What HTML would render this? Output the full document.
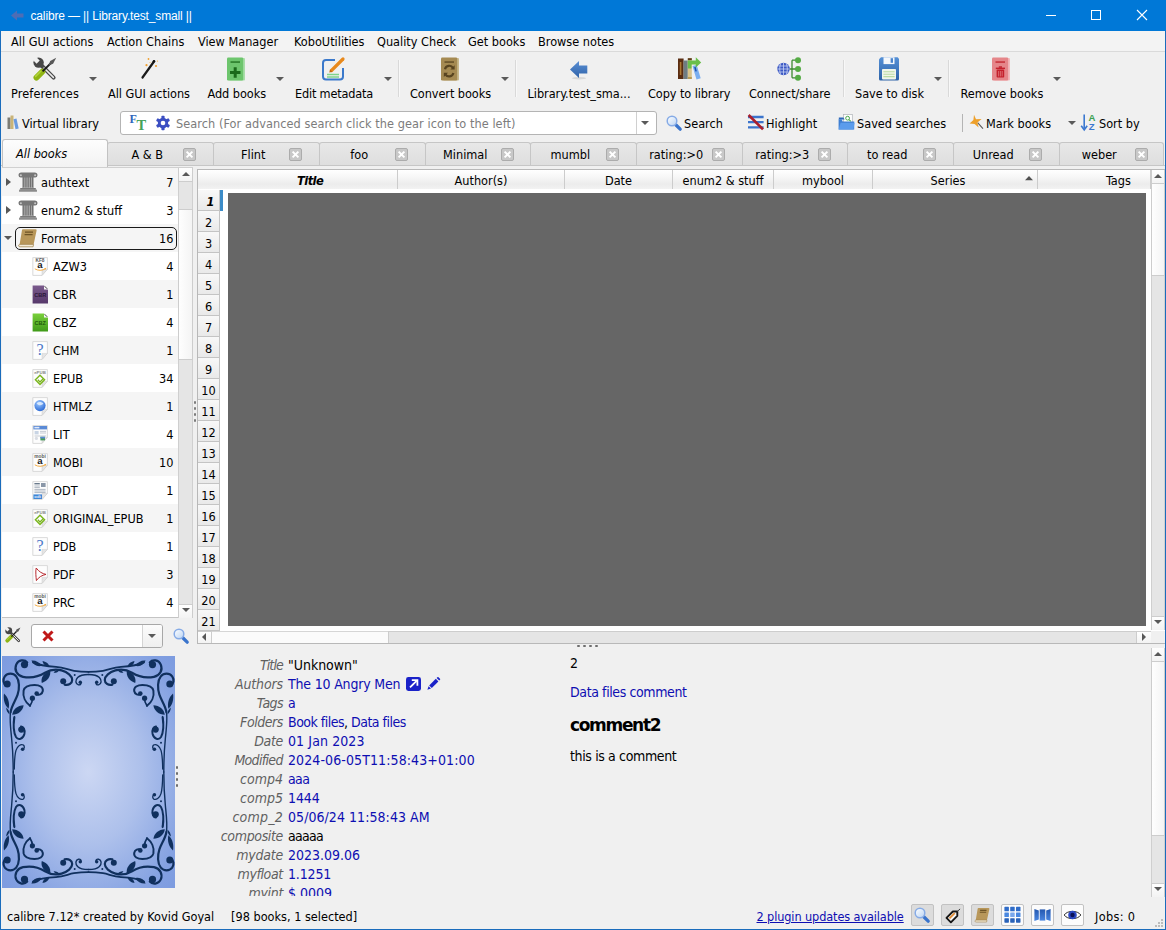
<!DOCTYPE html>
<html lang="en"><head><meta charset="utf-8"><title>calibre</title>
<style>
*{box-sizing:border-box;margin:0;padding:0}
html,body{width:1166px;height:930px;overflow:hidden;background:#f0f0f0}
body{font-family:"DejaVu Sans Condensed","DejaVu Sans","Liberation Sans",sans-serif;font-stretch:condensed;font-size:12.6px;color:#000;position:relative}
.a{position:absolute}
.t{position:absolute;white-space:nowrap;line-height:16px;height:16px}
.c{text-align:center}
.r{text-align:right}
svg{position:absolute;overflow:visible}
#titlebar{left:0;top:0;width:1166px;height:31px;background:#0078d7;color:#fff}
#title{left:30.5px;top:8px;font-family:"Liberation Sans",sans-serif;font-size:12px;color:#fff;letter-spacing:0px}
#menubar{left:1px;top:31px;width:1164px;height:21px;background:#f3f3f3;border-bottom:1px solid #dadada}
.sep{position:absolute;width:1px;background:#d9d9d9;border-right:1px solid #f8f8f8;box-sizing:content-box}
.dd{position:absolute;width:0;height:0;border-left:4px solid transparent;border-right:4px solid transparent;border-top:4px solid #5a5a5a}
.tab{position:absolute;top:142px;height:23px;background:linear-gradient(#e8e8e8,#dedede);border:1px solid #c6c6c6;border-bottom:none;border-radius:3px 3px 0 0}
.tabx{position:absolute;width:13px;height:13px;top:148px;background:#c8c8c8;border:1px solid #acacac;border-radius:2px}
.row{position:absolute;left:2px;width:176px;height:28px}
.hdr{position:absolute;top:170px;height:19px;border-right:1px solid #c8c8c8}
.rh{position:absolute;left:198px;width:22px;height:21px;border:none;border-right:1px solid #c4c4c4;border-bottom:1px solid #c4c4c4;background:linear-gradient(#f8f8f8,#e9e9e9);text-align:center;line-height:23px;font-size:12.6px}
.lbl{position:absolute;white-space:nowrap;font-style:italic;color:#606060;font-size:14px;line-height:18px;height:18px}
.val{position:absolute;left:288px;white-space:nowrap;font-size:14px;line-height:18px;height:18px;color:#0e0eb2}
.sbtn{position:absolute;top:904px;width:23px;height:22px;border:1px solid #c2c2c2;border-radius:2px}
</style></head>
<body>
<div id="titlebar" class="a"></div>
<svg style="left:11px;top:10px" width="13" height="11" viewBox="0 0 13 11"><path d="M0 5.5L6 0.5V3.5H12.5V7.5H6V10.5z" fill="#4d6db5"/></svg>
<div id="title" class="t"><span id="f1" style="letter-spacing:-0.150px;">calibre — || Library.test_small ||</span></div>
<svg style="left:1040px;top:8px" width="120" height="16" viewBox="0 0 120 16"><path d="M6 7.5h10" stroke="#fff" stroke-width="1"/><rect x="51.5" y="2.5" width="9" height="9" fill="none" stroke="#fff" stroke-width="1"/><path d="M97 2l10 10M107 2l-10 10" stroke="#fff" stroke-width="1.1"/></svg>
<div id="menubar" class="a"></div>
<div class="t " style="left:11px;top:33.5px;">All GUI actions</div>
<div class="t " style="left:107px;top:33.5px;">Action Chains</div>
<div class="t " style="left:198px;top:33.5px;">View Manager</div>
<div class="t " style="left:294px;top:33.5px;">KoboUtilities</div>
<div class="t " style="left:377px;top:33.5px;">Quality Check</div>
<div class="t " style="left:468px;top:33.5px;">Get books</div>
<div class="t " style="left:538px;top:33.5px;">Browse notes</div>
<div class="t c" style="left:1px;top:86px;width:88px;"><span id="f2" style="letter-spacing:0.131px;">Preferences</span></div>
<svg style="left:33px;top:57px" width="24" height="24" viewBox="0 0 24 24"><path d="M8 8L20.6 20.6" stroke="#4a4a4a" stroke-width="4" stroke-linecap="round"/><path d="M11 11L20.4 20.4" stroke="#ececec" stroke-width="1.5" stroke-linecap="round"/><circle cx="5.6" cy="5.6" r="5.2" fill="#474747"/><rect x="-3" y="3.4" width="8" height="4.4" fill="#f0f0f0" transform="rotate(45 5.6 5.6) translate(0,0)"/><path d="M3.4 20.6L9.4 14.6" stroke="#8fb414" stroke-width="5.8" stroke-linecap="round"/><path d="M2.6 19.4L8 14" stroke="#b2d43c" stroke-width="1.5" stroke-linecap="round"/><path d="M9.6 14.4L17.6 6.4" stroke="#1a1a1a" stroke-width="2"/><path d="M15.6 8.4L17.2 3.9L23.2 0.8L20.1 6.8z" fill="#585858"/></svg>
<div class="dd" style="left:89px;top:77px"></div>
<div class="t c" style="left:98px;top:86px;width:102px;"><span id="f3" style="letter-spacing:-0.029px;">All GUI actions</span></div>
<svg style="left:137px;top:57px" width="24" height="24" viewBox="0 0 24 24"><path d="M5.5 20.5L17 4.5" stroke="#1a1a1a" stroke-width="2.2" stroke-linecap="round"/><circle cx="17" cy="4.3" r="1.3" fill="#111"/><g fill="#f0a030"><circle cx="11.5" cy="2" r="0.9"/><circle cx="9.5" cy="8.2" r="1.1"/><circle cx="19" cy="9" r="1.1"/><circle cx="20.5" cy="4" r="0.6"/><circle cx="13" cy="5.5" r="0.5"/></g></svg>
<div class="t c" style="left:197.5px;top:86px;width:78.5px;"><span id="f4" style="letter-spacing:-0.061px;">Add books</span></div>
<svg style="left:224px;top:57px" width="24" height="24" viewBox="0 0 24 24"><rect x="5" y="1" width="16" height="22.5" rx="1" fill="#a9dea9"/><rect x="3" y="0.5" width="16.2" height="23" rx="1.2" fill="#6dc56d"/><rect x="6.5" y="4.4" width="9.5" height="1.3" fill="#1d6d1d"/><path d="M6 15.5h10.5M11.2 10.2v10.6" stroke="#1a6a1a" stroke-width="3"/></svg>
<div class="dd" style="left:276px;top:77px"></div>
<div class="t c" style="left:285px;top:86px;width:98px;"><span id="f5" style="letter-spacing:-0.189px;">Edit metadata</span></div>
<svg style="left:321px;top:57px" width="24" height="24" viewBox="0 0 24 24"><path d="M14 3H5a3 3 0 0 0-3 3v13.5a3 3 0 0 0 3 3h14a3 3 0 0 0 3-3V11" fill="none" stroke="#3b79cb" stroke-width="2"/><path d="M6 17.5h12M6 20h12" stroke="#7fd38a" stroke-width="1.3"/><path d="M10.5 13.5L22 2" stroke="#e8891c" stroke-width="3.2" stroke-linecap="round"/><path d="M8.2 15.6l0.9-3.2 2.4 2.4z" fill="#c46a10"/></svg>
<div class="dd" style="left:384px;top:77px"></div>
<div class="t c" style="left:400px;top:86px;width:101px;"><span id="f6" style="letter-spacing:-0.071px;">Convert books</span></div>
<svg style="left:438px;top:57px" width="24" height="24" viewBox="0 0 24 24"><rect x="5" y="1" width="16" height="22.5" rx="1" fill="#c9b98e"/><rect x="3" y="0.5" width="16.2" height="23" rx="1.2" fill="#a58a52"/><rect x="6.5" y="4.4" width="9.5" height="1.3" fill="#5a4622"/><path d="M7 12.2a4.4 4.4 0 0 1 8-1.4" fill="none" stroke="#584420" stroke-width="2.2"/><path d="M16.6 8.2v4.2h-4.2z" fill="#584420"/><path d="M15.4 16a4.4 4.4 0 0 1-8 1.4" fill="none" stroke="#584420" stroke-width="2.2"/><path d="M5.8 20v-4.2h4.2z" fill="#584420"/></svg>
<div class="dd" style="left:501px;top:77px"></div>
<div class="t c" style="left:517.5px;top:86px;width:123px;"><span id="f7" style="letter-spacing:-0.027px;">Library.test_sma...</span></div>
<svg style="left:567px;top:57px" width="24" height="24" viewBox="0 0 24 24"><defs><linearGradient id="lag" x1="0" y1="0" x2="0" y2="1"><stop offset="0" stop-color="#5a8fd4"/><stop offset="1" stop-color="#2f62a8"/></linearGradient></defs><ellipse cx="12" cy="21.2" rx="7" ry="1.2" fill="#d8d8d8"/><path d="M3 12.5L12 4v4.6h8.3v8H12v4.4z" fill="url(#lag)"/></svg>
<div class="t c" style="left:638px;top:86px;width:102.5px;"><span id="f8" style="letter-spacing:-0.084px;">Copy to library</span></div>
<svg style="left:677px;top:57px" width="24" height="24" viewBox="0 0 24 24"><rect x="1" y="1.5" width="5.6" height="20.5" fill="#5a2d12"/><rect x="2.8" y="5" width="1.6" height="13" fill="#c08a3a" opacity="0.8"/><rect x="6.6" y="3.5" width="4.2" height="18.5" fill="#6e7c82"/><rect x="10.8" y="1.2" width="4" height="20.8" fill="#d9c48c"/><rect x="10.8" y="1.2" width="4" height="2" fill="#5a3a1a"/><rect x="10.8" y="20" width="4" height="2" fill="#b89a55"/><path d="M15.5 9l4.2-1 4 13.2-4.2 1.2z" fill="#7aaef0"/><path d="M17.2 10.2l1.4-0.4 1.2 4.4-1.4 0.4z" fill="#1e4ea8"/><path d="M10.8 3.5h8V0.2L24.2 5.4 18.8 10.4V7.6h-4.3v4h-3.7z" fill="#6abf4b"/></svg>
<div class="t c" style="left:739px;top:86px;width:101.5px;"><span id="f9" style="letter-spacing:-0.043px;">Connect/share</span></div>
<svg style="left:777px;top:57px" width="24" height="24" viewBox="0 0 24 24"><path d="M12.5 12H15M15 3.2V20.8M15 3.2h4M15 12h4M15 20.8h4" stroke="#3d8a30" stroke-width="1.3" fill="none"/><circle cx="21" cy="3.2" r="3" fill="#55ab45"/><circle cx="21" cy="12" r="3" fill="#55ab45"/><circle cx="21" cy="20.8" r="3" fill="#55ab45"/><circle cx="6.5" cy="12" r="6.2" fill="#3d59c4"/><path d="M0.6 12h11.8M1.5 9h10M1.5 15h10M6.5 6v12M3.6 6.6c-1.2 3.4-1.2 7.4 0 10.8M9.4 6.6c1.2 3.4 1.2 7.4 0 10.8" stroke="#c9d4f4" stroke-width="0.8" fill="none"/></svg>
<div class="t c" style="left:845px;top:86px;width:89px;"><span id="f10" style="letter-spacing:-0.016px;">Save to disk</span></div>
<svg style="left:877px;top:57px" width="24" height="24" viewBox="0 0 24 24"><defs><linearGradient id="svg1" x1="0" y1="0" x2="0" y2="1"><stop offset="0" stop-color="#5590d6"/><stop offset="1" stop-color="#2d63a8"/></linearGradient></defs><path d="M4 0.3h16.6l1.4 1.4V22a1.5 1.5 0 0 1-1.5 1.5H3.5A1.5 1.5 0 0 1 2 22V2.3z" fill="url(#svg1)"/><rect x="6.5" y="0.3" width="11" height="6.8" fill="#f4f7fb"/><rect x="13.6" y="1.2" width="2.4" height="4.6" fill="#4a84cc"/><rect x="5" y="12" width="14" height="10.4" rx="0.8" fill="#f1f6ea"/><path d="M6.4 14.8h11.2M6.4 17.2h11.2M6.4 19.6h11.2" stroke="#b9dca2" stroke-width="1.1"/></svg>
<div class="dd" style="left:934px;top:77px"></div>
<div class="t c" style="left:950.4px;top:86px;width:102.9px;"><span id="f11" style="letter-spacing:-0.012px;">Remove books</span></div>
<svg style="left:989px;top:57px" width="24" height="24" viewBox="0 0 24 24"><rect x="5" y="1" width="16" height="22.5" rx="1" fill="#f3bcbe"/><rect x="3" y="0.5" width="16.2" height="23" rx="1.2" fill="#e5868a"/><rect x="6.5" y="4.4" width="9.5" height="1.3" fill="#c0202a"/><rect x="7.6" y="12.6" width="7.6" height="8" rx="0.8" fill="#c4202c"/><rect x="6.8" y="10.6" width="9.2" height="1.5" fill="#c4202c"/><rect x="9.8" y="9.3" width="3.2" height="1.5" fill="#c4202c"/><path d="M9.6 14v5.4M11.4 14v5.4M13.2 14v5.4" stroke="#e5868a" stroke-width="0.7"/></svg>
<div class="dd" style="left:1053px;top:77px"></div>
<div class="sep" style="left:398px;top:60px;height:37px"></div>
<div class="sep" style="left:515px;top:60px;height:37px"></div>
<div class="sep" style="left:843px;top:60px;height:37px"></div>
<div class="sep" style="left:948px;top:60px;height:37px"></div>
<svg style="left:7px;top:115px" width="12" height="15" viewBox="0 0 12 15"><rect x="0.5" y="2.5" width="3" height="11.5" fill="#7c7c74"/><rect x="3.5" y="0.5" width="3" height="13.5" fill="#c9b478"/><path d="M6.5 4.2l3-0.8 2.2 10-3.2 0.8z" fill="#6a9be0"/></svg>
<div class="t " style="left:22px;top:116px;">Virtual library</div>
<div class="a" style="left:120px;top:111px;width:537px;height:24px;background:#fff;border:1px solid #b4b4b4;border-radius:3px"></div>
<div class="a" style="left:636px;top:112px;width:1px;height:22px;background:#d0d0d0"></div>
<div class="dd" style="left:641px;top:121px"></div>
<div class="t" style="left:129.5px;top:111.2px;font-family:'Liberation Serif',serif;font-size:12px;font-weight:bold;color:#3166bc;line-height:16px">F</div>
<div class="t" style="left:136.4px;top:117.3px;font-family:'Liberation Serif',serif;font-size:14.5px;font-weight:bold;color:#45a35a;line-height:16px">T</div>
<svg style="left:156px;top:116px" width="14" height="14" viewBox="0 0 14 14"><rect x="5.4" y="-0.2" width="3.2" height="14.4" rx="0.8" transform="rotate(0 7 7)" fill="#3b4ec2"/><rect x="5.4" y="-0.2" width="3.2" height="14.4" rx="0.8" transform="rotate(60 7 7)" fill="#3b4ec2"/><rect x="5.4" y="-0.2" width="3.2" height="14.4" rx="0.8" transform="rotate(120 7 7)" fill="#3b4ec2"/><circle cx="7" cy="7" r="5.2" fill="#3b4ec2"/><circle cx="7" cy="7" r="2.3" fill="#fff"/></svg>
<div class="t " style="left:176px;top:116px;color:#7c7c7c"><span id="f12" style="letter-spacing:0.061px;">Search (For advanced search click the gear icon to the left)</span></div>
<svg style="left:666px;top:115px" width="16" height="16" viewBox="0 0 16 16"><defs><linearGradient id="mg1" x1="0" y1="0" x2="1" y2="1"><stop offset="0" stop-color="#ffffff"/><stop offset="1" stop-color="#b9d3f3"/></linearGradient></defs><path d="M10 10L14.2 14.2" stroke="#3a74cc" stroke-width="3.3" stroke-linecap="round"/><circle cx="6" cy="6" r="4.8" fill="url(#mg1)" stroke="#86abe6" stroke-width="1.5"/></svg>
<div class="t " style="left:684px;top:116px;">Search</div>
<svg style="left:747px;top:114px" width="18" height="16" viewBox="0 0 18 16"><path d="M1 3h15.6M1 8.2h15.6M1 13.4h15.6" stroke="#3b74cc" stroke-width="2.3"/><path d="M1.6 1L16 15.4" stroke="#aa1e2c" stroke-width="2.6"/></svg>
<div class="t " style="left:766px;top:116px;">Highlight</div>
<svg style="left:838px;top:114px" width="17" height="16" viewBox="0 0 17 16"><rect x="5.5" y="0.6" width="8.8" height="9" fill="#fdfdfd" stroke="#b0b4b8" stroke-width="0.7"/><circle cx="9.6" cy="4.2" r="1.9" fill="none" stroke="#4aa84a" stroke-width="1"/><path d="M11 5.6l1.8 1.8" stroke="#4aa84a" stroke-width="1.1"/><path d="M0.8 3.6h4.6l1.2 1.8h-5.8z" fill="#2f69b8"/><path d="M0.6 15.4V5.2h3l1 2.2h11.6v8z" fill="#3f7fd2"/><path d="M0.6 15.4l2-6.6h14l-1.2 6.6z" fill="#5b9cec"/></svg>
<div class="t " style="left:857px;top:116px;">Saved searches</div>
<div class="a" style="left:962px;top:114px;width:1px;height:18px;background:#b4b4b4"></div>
<svg style="left:969px;top:114px" width="15" height="16" viewBox="0 0 15 16"><path d="M8.6 8.6L14 14.6" stroke="#5a5a5a" stroke-width="1.1"/><path d="M5 0.8L7 5.2L12.6 5L8.4 8.6L9.6 13.4L5.6 10L0.6 9.4L4.4 6z" fill="#eea02a"/></svg>
<div class="t " style="left:986px;top:116px;">Mark books</div>
<div class="dd" style="left:1068px;top:121px"></div>
<svg style="left:1081px;top:114px" width="16" height="17" viewBox="0 0 16 17"><path d="M3.2 0.5v14" stroke="#3b78d0" stroke-width="1.6"/><path d="M0.2 11.8l3 4 3-4" fill="none" stroke="#3b78d0" stroke-width="1.6"/><text x="7.6" y="7.2" font-family="Liberation Sans,sans-serif" font-weight="bold" font-size="9.6" fill="#3aa050">A</text><text x="7.8" y="16" font-family="Liberation Sans,sans-serif" font-weight="bold" font-size="9.6" fill="#3b78d0">Z</text></svg>
<div class="t " style="left:1099px;top:116px;">Sort by</div>
<div class="a" style="left:1px;top:165px;width:1164px;height:1px;background:#c6c6c6"></div>
<div class="tab" style="left:107px;width:107px"></div>
<div class="t c" style="left:107px;top:147px;width:80.5px;">A &amp; B</div>
<div class="tabx" style="left:183px"></div>
<svg style="left:183px;top:148px" width="13" height="13" viewBox="0 0 13 13"><path d="M3.6 3.6l5.8 5.8M9.4 3.6l-5.8 5.8" stroke="#fff" stroke-width="2"/></svg>
<div class="tab" style="left:213px;width:107px"></div>
<div class="t c" style="left:213px;top:147px;width:80.5px;">Flint</div>
<div class="tabx" style="left:289px"></div>
<svg style="left:289px;top:148px" width="13" height="13" viewBox="0 0 13 13"><path d="M3.6 3.6l5.8 5.8M9.4 3.6l-5.8 5.8" stroke="#fff" stroke-width="2"/></svg>
<div class="tab" style="left:319px;width:107px"></div>
<div class="t c" style="left:319px;top:147px;width:80.5px;">foo</div>
<div class="tabx" style="left:395px"></div>
<svg style="left:395px;top:148px" width="13" height="13" viewBox="0 0 13 13"><path d="M3.6 3.6l5.8 5.8M9.4 3.6l-5.8 5.8" stroke="#fff" stroke-width="2"/></svg>
<div class="tab" style="left:425px;width:106px"></div>
<div class="t c" style="left:425px;top:147px;width:80.5px;">Minimal</div>
<div class="tabx" style="left:501px"></div>
<svg style="left:501px;top:148px" width="13" height="13" viewBox="0 0 13 13"><path d="M3.6 3.6l5.8 5.8M9.4 3.6l-5.8 5.8" stroke="#fff" stroke-width="2"/></svg>
<div class="tab" style="left:530px;width:107px"></div>
<div class="t c" style="left:530px;top:147px;width:80.5px;">mumbl</div>
<div class="tabx" style="left:606px"></div>
<svg style="left:606px;top:148px" width="13" height="13" viewBox="0 0 13 13"><path d="M3.6 3.6l5.8 5.8M9.4 3.6l-5.8 5.8" stroke="#fff" stroke-width="2"/></svg>
<div class="tab" style="left:636px;width:107px"></div>
<div class="t c" style="left:636px;top:147px;width:80.5px;">rating:&gt;0</div>
<div class="tabx" style="left:712px"></div>
<svg style="left:712px;top:148px" width="13" height="13" viewBox="0 0 13 13"><path d="M3.6 3.6l5.8 5.8M9.4 3.6l-5.8 5.8" stroke="#fff" stroke-width="2"/></svg>
<div class="tab" style="left:742px;width:106px"></div>
<div class="t c" style="left:742px;top:147px;width:80.5px;">rating:&gt;3</div>
<div class="tabx" style="left:818px"></div>
<svg style="left:818px;top:148px" width="13" height="13" viewBox="0 0 13 13"><path d="M3.6 3.6l5.8 5.8M9.4 3.6l-5.8 5.8" stroke="#fff" stroke-width="2"/></svg>
<div class="tab" style="left:847px;width:107px"></div>
<div class="t c" style="left:847px;top:147px;width:80.5px;">to read</div>
<div class="tabx" style="left:923px"></div>
<svg style="left:923px;top:148px" width="13" height="13" viewBox="0 0 13 13"><path d="M3.6 3.6l5.8 5.8M9.4 3.6l-5.8 5.8" stroke="#fff" stroke-width="2"/></svg>
<div class="tab" style="left:953px;width:107px"></div>
<div class="t c" style="left:953px;top:147px;width:80.5px;">Unread</div>
<div class="tabx" style="left:1029px"></div>
<svg style="left:1029px;top:148px" width="13" height="13" viewBox="0 0 13 13"><path d="M3.6 3.6l5.8 5.8M9.4 3.6l-5.8 5.8" stroke="#fff" stroke-width="2"/></svg>
<div class="tab" style="left:1059px;width:105px"></div>
<div class="t c" style="left:1059px;top:147px;width:80.5px;">weber</div>
<div class="tabx" style="left:1135px"></div>
<svg style="left:1135px;top:148px" width="13" height="13" viewBox="0 0 13 13"><path d="M3.6 3.6l5.8 5.8M9.4 3.6l-5.8 5.8" stroke="#fff" stroke-width="2"/></svg>
<div class="a" style="left:2px;top:139px;width:106px;height:28px;background:linear-gradient(#fdfdfd,#f2f2f2);border:1px solid #c2c2c2;border-bottom:none;border-radius:3px 3px 0 0"></div>
<div class="t " style="left:16px;top:146px;font-style:italic">All books</div>
<div class="a" style="left:2px;top:167px;width:191px;height:451px;background:#fff;border-top:1px solid #d0d0d0;border-bottom:1px solid #c4c4c4"></div>
<div class="row" style="top:168px;height:28px;background:#f5f5f5"></div>
<svg style="left:18px;top:172px" width="20" height="20" viewBox="0 0 20 20"><rect x="4" y="4" width="12" height="12.5" fill="#b4b4b4"/><rect x="5.2" y="5" width="1.1" height="10.5" fill="#6a6a6a"/><rect x="7.4" y="5" width="1.1" height="10.5" fill="#6a6a6a"/><rect x="9.6" y="5" width="1.1" height="10.5" fill="#6a6a6a"/><rect x="11.8" y="5" width="1.1" height="10.5" fill="#6a6a6a"/><rect x="13.8" y="5" width="1.1" height="10.5" fill="#6a6a6a"/><path d="M0.5 3.2a2.8 2.8 0 0 1 2.8-2.8h13.4a2.8 2.8 0 0 1 2.8 2.8a2.4 2.4 0 0 1-2.4 2.4H2.9A2.4 2.4 0 0 1 0.5 3.2z" fill="#777"/><circle cx="2.9" cy="3.3" r="1" fill="#c8c8c8"/><circle cx="17.1" cy="3.3" r="1" fill="#c8c8c8"/><rect x="2.2" y="16" width="15.6" height="1.8" fill="#7a7a7a"/><rect x="1" y="17.6" width="18" height="2.2" rx="0.6" fill="#8c8c8c"/></svg>
<div class="t " style="left:41px;top:175px;">authtext</div>
<div class="t r" style="left:123px;top:175px;width:50.5px;">7</div>
<div class="row" style="top:196px;height:28px;background:#ffffff"></div>
<svg style="left:18px;top:200px" width="20" height="20" viewBox="0 0 20 20"><rect x="4" y="4" width="12" height="12.5" fill="#b4b4b4"/><rect x="5.2" y="5" width="1.1" height="10.5" fill="#6a6a6a"/><rect x="7.4" y="5" width="1.1" height="10.5" fill="#6a6a6a"/><rect x="9.6" y="5" width="1.1" height="10.5" fill="#6a6a6a"/><rect x="11.8" y="5" width="1.1" height="10.5" fill="#6a6a6a"/><rect x="13.8" y="5" width="1.1" height="10.5" fill="#6a6a6a"/><path d="M0.5 3.2a2.8 2.8 0 0 1 2.8-2.8h13.4a2.8 2.8 0 0 1 2.8 2.8a2.4 2.4 0 0 1-2.4 2.4H2.9A2.4 2.4 0 0 1 0.5 3.2z" fill="#777"/><circle cx="2.9" cy="3.3" r="1" fill="#c8c8c8"/><circle cx="17.1" cy="3.3" r="1" fill="#c8c8c8"/><rect x="2.2" y="16" width="15.6" height="1.8" fill="#7a7a7a"/><rect x="1" y="17.6" width="18" height="2.2" rx="0.6" fill="#8c8c8c"/></svg>
<div class="t " style="left:41px;top:203px;">enum2 &amp; stuff</div>
<div class="t r" style="left:123px;top:203px;width:50.5px;">3</div>
<div class="row" style="top:224px;height:28px;background:#f5f5f5"></div>
<svg style="left:18px;top:228px" width="20" height="20" viewBox="0 0 20 20"><path d="M5 1.2h12.6a1 1 0 0 1 1 1.2L15.6 16.4H1.6L4 2a1 1 0 0 1 1-0.8z" fill="#b8975a"/><path d="M1.6 16.4h14l-0.5 2.4H2.2a1.2 1.2 0 0 1-0.6-2.4z" fill="#f2ead6" stroke="#9c7c42" stroke-width="0.7"/><path d="M7 4.2h8M6.6 6.6h8" stroke="#6e5426" stroke-width="1.3"/></svg>
<div class="t " style="left:41px;top:231px;">Formats</div>
<div class="t r" style="left:123px;top:231px;width:50.5px;">16</div>
<div class="row" style="top:252px;height:28px;background:#ffffff"></div>
<svg style="left:32px;top:256.5px" width="16.5" height="19" viewBox="0 0 16.5 19"><path d="M0.8 0.6h14.6v11.8l-5.4 6H0.8z" fill="#fdfdfd" stroke="#d0d0d0" stroke-width="0.8"/><path d="M15.4 12.4h-5.4v6z" fill="#e4e4e4" stroke="#cccccc" stroke-width="0.5"/><text x="8" y="4.6" text-anchor="middle" font-family="Liberation Sans,sans-serif" font-weight="bold" font-size="4.8" fill="#5a5a5a">KF8</text><text x="8" y="10.8" text-anchor="middle" font-family="Liberation Sans,sans-serif" font-weight="bold" font-size="9.6" fill="#1a1a1a">a</text><path d="M2.8 11.8c3 2 7.6 2 10.6 0" fill="none" stroke="#f4ad45" stroke-width="1"/><path d="M14.4 10.8l-2.4 0.4 1.8 1.6z" fill="#f4ad45"/></svg>
<div class="t " style="left:53px;top:259px;">AZW3</div>
<div class="t r" style="left:123px;top:259px;width:50.5px;">4</div>
<div class="row" style="top:280px;height:28px;background:#f5f5f5"></div>
<svg style="left:32px;top:284.5px" width="16.5" height="19" viewBox="0 0 16.5 19"><defs><linearGradient id="gcbr" x1="0" y1="0" x2="0" y2="1"><stop offset="0" stop-color="#7a5a8c"/><stop offset="1" stop-color="#56386a"/></linearGradient></defs><path d="M0.6 0.4h11.4l4 4v14.2H0.6z" fill="url(#gcbr)"/><path d="M12 0.4v4h4z" fill="#f4f4f4"/><path d="M12.6 1.2l2.6 2.6" stroke="#222" stroke-width="0.8"/><text x="8.2" y="12.4" text-anchor="middle" font-family="Liberation Sans,sans-serif" font-weight="bold" font-size="5.6" fill="#2c1838">CBR</text></svg>
<div class="t " style="left:53px;top:287px;">CBR</div>
<div class="t r" style="left:123px;top:287px;width:50.5px;">1</div>
<div class="row" style="top:308px;height:28px;background:#ffffff"></div>
<svg style="left:32px;top:312.5px" width="16.5" height="19" viewBox="0 0 16.5 19"><defs><linearGradient id="gcbz" x1="0" y1="0" x2="0" y2="1"><stop offset="0" stop-color="#7ad03c"/><stop offset="1" stop-color="#3f9a18"/></linearGradient></defs><path d="M0.6 0.4h11.4l4 4v14.2H0.6z" fill="url(#gcbz)"/><path d="M12 0.4v4h4z" fill="#f4f4f4"/><path d="M12.6 1.2l2.6 2.6" stroke="#222" stroke-width="0.8"/><text x="8.2" y="12.4" text-anchor="middle" font-family="Liberation Sans,sans-serif" font-weight="bold" font-size="5.6" fill="#1f5a0c">CBZ</text></svg>
<div class="t " style="left:53px;top:315px;">CBZ</div>
<div class="t r" style="left:123px;top:315px;width:50.5px;">4</div>
<div class="row" style="top:336px;height:28px;background:#f5f5f5"></div>
<svg style="left:32px;top:340.5px" width="16.5" height="19" viewBox="0 0 16.5 19"><path d="M0.8 0.6h14.6v11.8l-5.4 6H0.8z" fill="#fdfdfd" stroke="#d0d0d0" stroke-width="0.8"/><path d="M15.4 12.4h-5.4v6z" fill="#e4e4e4" stroke="#cccccc" stroke-width="0.5"/><text x="8" y="14" text-anchor="middle" font-family="Liberation Serif,serif" font-size="16" fill="#4a78c8">?</text></svg>
<div class="t " style="left:53px;top:343px;">CHM</div>
<div class="t r" style="left:123px;top:343px;width:50.5px;">1</div>
<div class="row" style="top:364px;height:28px;background:#ffffff"></div>
<svg style="left:32px;top:368.5px" width="16.5" height="19" viewBox="0 0 16.5 19"><path d="M0.8 0.6h14.6v11.8l-5.4 6H0.8z" fill="#fdfdfd" stroke="#d0d0d0" stroke-width="0.8"/><path d="M15.4 12.4h-5.4v6z" fill="#e4e4e4" stroke="#cccccc" stroke-width="0.5"/><text x="8" y="4.8" text-anchor="middle" font-family="Liberation Sans,sans-serif" font-weight="bold" font-size="4.4" fill="#8a8a8a">ePUB</text><path d="M8 6.2L12.6 10.8 8 15.4 3.4 10.8z" fill="none" stroke="#7ab51d" stroke-width="1.4"/><path d="M5.8 10.8L8 13l3.2-3.2" fill="none" stroke="#7ab51d" stroke-width="1.3"/></svg>
<div class="t " style="left:53px;top:371px;">EPUB</div>
<div class="t r" style="left:123px;top:371px;width:50.5px;">34</div>
<div class="row" style="top:392px;height:28px;background:#f5f5f5"></div>
<svg style="left:32px;top:396.5px" width="16.5" height="19" viewBox="0 0 16.5 19"><path d="M0.8 0.6h14.6v11.8l-5.4 6H0.8z" fill="#fdfdfd" stroke="#d0d0d0" stroke-width="0.8"/><path d="M15.4 12.4h-5.4v6z" fill="#e4e4e4" stroke="#cccccc" stroke-width="0.5"/><defs><radialGradient id="ghz" cx="0.4" cy="0.3" r="0.8"><stop offset="0" stop-color="#9cc8ff"/><stop offset="1" stop-color="#1f5fd0"/></radialGradient></defs><circle cx="8" cy="8.6" r="5.6" fill="url(#ghz)"/><path d="M4.6 6.2c2-1.6 5-1.6 6.8 0.4-1.4 1.8-4.8 2.6-6.8-0.4z" fill="#e8f2ff" opacity="0.8"/></svg>
<div class="t " style="left:53px;top:399px;">HTMLZ</div>
<div class="t r" style="left:123px;top:399px;width:50.5px;">1</div>
<div class="row" style="top:420px;height:28px;background:#ffffff"></div>
<svg style="left:32px;top:424.5px" width="16.5" height="19" viewBox="0 0 16.5 19"><path d="M0.8 0.6h14.6v11.8l-5.4 6H0.8z" fill="#fdfdfd" stroke="#d0d0d0" stroke-width="0.8"/><path d="M15.4 12.4h-5.4v6z" fill="#e4e4e4" stroke="#cccccc" stroke-width="0.5"/><rect x="1.4" y="1" width="13.6" height="3.4" fill="#5a8ad6"/><rect x="2.4" y="1.8" width="5" height="1.6" fill="#dfe9fa"/><rect x="2.6" y="6" width="4" height="3.4" fill="#c8d4e4"/><path d="M8 6.4h6M8 8h6M2.6 11h11.6" stroke="#b8bec8" stroke-width="0.8"/><rect x="8.4" y="11.8" width="4.6" height="3.6" fill="#4a9a5a"/><rect x="8.4" y="11.8" width="4.6" height="1.6" fill="#5a8ad6"/><circle cx="4.4" cy="13.4" r="1.6" fill="#d8dce4"/></svg>
<div class="t " style="left:53px;top:427px;">LIT</div>
<div class="t r" style="left:123px;top:427px;width:50.5px;">4</div>
<div class="row" style="top:448px;height:28px;background:#f5f5f5"></div>
<svg style="left:32px;top:452.5px" width="16.5" height="19" viewBox="0 0 16.5 19"><path d="M0.8 0.6h14.6v11.8l-5.4 6H0.8z" fill="#fdfdfd" stroke="#d0d0d0" stroke-width="0.8"/><path d="M15.4 12.4h-5.4v6z" fill="#e4e4e4" stroke="#cccccc" stroke-width="0.5"/><text x="8" y="4.6" text-anchor="middle" font-family="Liberation Sans,sans-serif" font-weight="bold" font-size="4.8" fill="#5a5a5a">mobi</text><text x="8" y="10.8" text-anchor="middle" font-family="Liberation Sans,sans-serif" font-weight="bold" font-size="9.6" fill="#1a1a1a">a</text><path d="M2.8 11.8c3 2 7.6 2 10.6 0" fill="none" stroke="#f4ad45" stroke-width="1"/><path d="M14.4 10.8l-2.4 0.4 1.8 1.6z" fill="#f4ad45"/></svg>
<div class="t " style="left:53px;top:455px;">MOBI</div>
<div class="t r" style="left:123px;top:455px;width:50.5px;">10</div>
<div class="row" style="top:476px;height:28px;background:#ffffff"></div>
<svg style="left:32px;top:480.5px" width="16.5" height="19" viewBox="0 0 16.5 19"><path d="M0.8 0.6h14.6v11.8l-5.4 6H0.8z" fill="#fdfdfd" stroke="#d0d0d0" stroke-width="0.8"/><path d="M15.4 12.4h-5.4v6z" fill="#e4e4e4" stroke="#cccccc" stroke-width="0.5"/><rect x="2.4" y="2" width="5.4" height="1.4" fill="#6a7a8c"/><rect x="9" y="2" width="4.6" height="4" fill="#8a97a8"/><path d="M2.4 5h5.4M2.4 6.6h5.4M2.4 8.4h11.2M2.4 10h11.2M2.4 11.6h11.2" stroke="#9aa4b2" stroke-width="0.8"/><rect x="1.4" y="13.4" width="8.6" height="4.6" fill="#3f86d6"/><text x="5.6" y="17.2" text-anchor="middle" font-family="Liberation Sans,sans-serif" font-weight="bold" font-size="4.2" fill="#e8f0fc">odt</text></svg>
<div class="t " style="left:53px;top:483px;">ODT</div>
<div class="t r" style="left:123px;top:483px;width:50.5px;">1</div>
<div class="row" style="top:504px;height:28px;background:#f5f5f5"></div>
<svg style="left:32px;top:508.5px" width="16.5" height="19" viewBox="0 0 16.5 19"><path d="M0.8 0.6h14.6v11.8l-5.4 6H0.8z" fill="#fdfdfd" stroke="#d0d0d0" stroke-width="0.8"/><path d="M15.4 12.4h-5.4v6z" fill="#e4e4e4" stroke="#cccccc" stroke-width="0.5"/><text x="8" y="4.8" text-anchor="middle" font-family="Liberation Sans,sans-serif" font-weight="bold" font-size="4.4" fill="#8a8a8a">ePUB</text><path d="M8 6.2L12.6 10.8 8 15.4 3.4 10.8z" fill="none" stroke="#7ab51d" stroke-width="1.4"/><path d="M5.8 10.8L8 13l3.2-3.2" fill="none" stroke="#7ab51d" stroke-width="1.3"/></svg>
<div class="t " style="left:53px;top:511px;">ORIGINAL_EPUB</div>
<div class="t r" style="left:123px;top:511px;width:50.5px;">1</div>
<div class="row" style="top:532px;height:28px;background:#ffffff"></div>
<svg style="left:32px;top:536.5px" width="16.5" height="19" viewBox="0 0 16.5 19"><path d="M0.8 0.6h14.6v11.8l-5.4 6H0.8z" fill="#fdfdfd" stroke="#d0d0d0" stroke-width="0.8"/><path d="M15.4 12.4h-5.4v6z" fill="#e4e4e4" stroke="#cccccc" stroke-width="0.5"/><text x="8" y="14" text-anchor="middle" font-family="Liberation Serif,serif" font-size="16" fill="#4a78c8">?</text></svg>
<div class="t " style="left:53px;top:539px;">PDB</div>
<div class="t r" style="left:123px;top:539px;width:50.5px;">1</div>
<div class="row" style="top:560px;height:28px;background:#f5f5f5"></div>
<svg style="left:32px;top:564.5px" width="16.5" height="19" viewBox="0 0 16.5 19"><path d="M0.8 0.6h14.6v11.8l-5.4 6H0.8z" fill="#fdfdfd" stroke="#d0d0d0" stroke-width="0.8"/><path d="M15.4 12.4h-5.4v6z" fill="#e4e4e4" stroke="#cccccc" stroke-width="0.5"/><path d="M4.2 3c-0.8 3.6-0.2 9 0.2 12.6 2.2-3.4 5.6-5.4 9.6-6.2-3.6-0.6-7.2-2.8-9.8-6.4z" fill="none" stroke="#b8282e" stroke-width="1" stroke-linejoin="round"/></svg>
<div class="t " style="left:53px;top:567px;">PDF</div>
<div class="t r" style="left:123px;top:567px;width:50.5px;">3</div>
<div class="row" style="top:588px;height:29px;background:#ffffff"></div>
<svg style="left:32px;top:592.5px" width="16.5" height="19" viewBox="0 0 16.5 19"><path d="M0.8 0.6h14.6v11.8l-5.4 6H0.8z" fill="#fdfdfd" stroke="#d0d0d0" stroke-width="0.8"/><path d="M15.4 12.4h-5.4v6z" fill="#e4e4e4" stroke="#cccccc" stroke-width="0.5"/><text x="8" y="4.6" text-anchor="middle" font-family="Liberation Sans,sans-serif" font-weight="bold" font-size="4.8" fill="#5a5a5a">mobi</text><text x="8" y="10.8" text-anchor="middle" font-family="Liberation Sans,sans-serif" font-weight="bold" font-size="9.6" fill="#1a1a1a">a</text><path d="M2.8 11.8c3 2 7.6 2 10.6 0" fill="none" stroke="#f4ad45" stroke-width="1"/><path d="M14.4 10.8l-2.4 0.4 1.8 1.6z" fill="#f4ad45"/></svg>
<div class="t " style="left:53px;top:595px;">PRC</div>
<div class="t r" style="left:123px;top:595px;width:50.5px;">4</div>
<svg style="left:6px;top:178px" width="5" height="8" viewBox="0 0 5 8"><path d="M0 0L5 4L0 8z" fill="#585858"/></svg>
<svg style="left:6px;top:206px" width="5" height="8" viewBox="0 0 5 8"><path d="M0 0L5 4L0 8z" fill="#585858"/></svg>
<div class="dd" style="left:4px;top:236px;border-top-color:#585858"></div>
<div class="a" style="left:15px;top:227px;width:162px;height:23px;border:1px solid #1a1a1a;border-radius:5px"></div>
<div class="a" style="left:178px;top:168px;width:15px;height:450px;background:#e5e5e5;border-left:1px solid #cfcfcf;border-right:1px solid #d0d0d0"></div><div class="a" style="left:178px;top:168px;width:15px;height:14px;background:linear-gradient(#fefefe,#f3f3f3);border:1px solid #cdcdcd;border-top:none"></div><svg style="left:181.5px;top:172px" width="8" height="4" viewBox="0 0 8 4"><path d="M0 4L4 0L8 4z" fill="#585858"/></svg><div class="a" style="left:178px;top:209px;width:15px;height:151px;background:linear-gradient(90deg,#fefefe,#f4f4f4);border:1px solid #cdcdcd;"></div><div class="a" style="left:178px;top:604px;width:15px;height:14px;background:linear-gradient(#fefefe,#f3f3f3);border:1px solid #cdcdcd;border-bottom:none"></div><svg style="left:181.5px;top:608px" width="8" height="4" viewBox="0 0 8 4"><path d="M0 0L4 4L8 0z" fill="#585858"/></svg>
<svg style="left:5px;top:627px" width="16" height="16" viewBox="0 0 24 24"><path d="M8 8L20.6 20.6" stroke="#4a4a4a" stroke-width="4" stroke-linecap="round"/><path d="M11 11L20.4 20.4" stroke="#ececec" stroke-width="1.5" stroke-linecap="round"/><circle cx="5.6" cy="5.6" r="5.2" fill="#474747"/><rect x="-3" y="3.4" width="8" height="4.4" fill="#f0f0f0" transform="rotate(45 5.6 5.6) translate(0,0)"/><path d="M3.4 20.6L9.4 14.6" stroke="#8fb414" stroke-width="5.8" stroke-linecap="round"/><path d="M2.6 19.4L8 14" stroke="#b2d43c" stroke-width="1.5" stroke-linecap="round"/><path d="M9.6 14.4L17.6 6.4" stroke="#1a1a1a" stroke-width="2"/><path d="M15.6 8.4L17.2 3.9L23.2 0.8L20.1 6.8z" fill="#585858"/></svg>
<div class="a" style="left:31px;top:624px;width:132px;height:24px;background:#fff;border:1px solid #a8a8a8;border-radius:3px"></div>
<div class="a" style="left:142px;top:625px;width:1px;height:22px;background:#d4d4d4"></div>
<div class="a" style="left:143px;top:625px;width:19px;height:22px;background:linear-gradient(#fcfcfc,#efefef);border-radius:0 2px 2px 0"></div>
<div class="dd" style="left:148px;top:634px"></div>
<svg style="left:42px;top:630px" width="12" height="12" viewBox="0 0 12 12"><path d="M1.5 1.5l9 9M10.5 1.5l-9 9" stroke="#c01818" stroke-width="3"/></svg>
<svg style="left:173px;top:628px" width="16" height="16" viewBox="0 0 16 16"><defs><linearGradient id="mg2" x1="0" y1="0" x2="1" y2="1"><stop offset="0" stop-color="#ffffff"/><stop offset="1" stop-color="#b9d3f3"/></linearGradient></defs><path d="M10 10L14.2 14.2" stroke="#3a74cc" stroke-width="3.3" stroke-linecap="round"/><circle cx="6" cy="6" r="4.8" fill="url(#mg2)" stroke="#86abe6" stroke-width="1.5"/></svg>
<div class="a" style="left:194px;top:401.2px;width:2px;height:2.5px;background:#7c7c7c;border-radius:1px"></div>
<div class="a" style="left:194px;top:407.2px;width:2px;height:2.5px;background:#7c7c7c;border-radius:1px"></div>
<div class="a" style="left:194px;top:413.2px;width:2px;height:2.5px;background:#7c7c7c;border-radius:1px"></div>
<div class="a" style="left:194px;top:419.2px;width:2px;height:2.5px;background:#7c7c7c;border-radius:1px"></div>
<div class="a" style="left:197px;top:169px;width:968px;height:475px;background:#fff;border:1px solid #b8b8b8;border-right:none"></div>
<div class="a" style="left:198px;top:170px;width:953px;height:18.5px;background:linear-gradient(#ffffff 0%,#f6f6f6 40%,#ececec 75%,#f2f2f2 100%)"></div>
<div class="a" style="left:397px;top:170px;width:1px;height:18.5px;background:#cccccc"></div>
<div class="a" style="left:564px;top:170px;width:1px;height:18.5px;background:#cccccc"></div>
<div class="a" style="left:672px;top:170px;width:1px;height:18.5px;background:#cccccc"></div>
<div class="a" style="left:773px;top:170px;width:1px;height:18.5px;background:#cccccc"></div>
<div class="a" style="left:872px;top:170px;width:1px;height:18.5px;background:#cccccc"></div>
<div class="a" style="left:1037px;top:170px;width:1px;height:18.5px;background:#cccccc"></div>
<div class="a" style="left:1150px;top:170px;width:1px;height:18.5px;background:#cccccc"></div>
<div class="t " style="left:297px;top:172.5px;font-weight:bold;font-style:italic;font-size:12.8px"><span id="f13" style="letter-spacing:-0.573px;">Title</span></div>
<div class="t c" style="left:398px;top:172.5px;width:166px;">Author(s)</div>
<div class="t c" style="left:565px;top:172.5px;width:107px;">Date</div>
<div class="t c" style="left:673px;top:172.5px;width:100px;">enum2 &amp; stuff</div>
<div class="t c" style="left:774px;top:172.5px;width:98px;">mybool</div>
<div class="t c" style="left:873px;top:172.5px;width:150px;">Series</div>
<div class="t " style="left:1106px;top:172.5px;">Tags</div>
<svg style="left:1024.5px;top:176.3px" width="8" height="4.2" viewBox="0 0 8 4.2"><path d="M0 4.2L4 0L8 4.2z" fill="#505050"/></svg>
<div class="rh" style="top:190px;font-weight:bold;font-style:italic;padding-left:4px;">1</div>
<div class="rh" style="top:211px;">2</div>
<div class="rh" style="top:232px;">3</div>
<div class="rh" style="top:253px;">4</div>
<div class="rh" style="top:274px;">5</div>
<div class="rh" style="top:295px;">6</div>
<div class="rh" style="top:316px;">7</div>
<div class="rh" style="top:337px;">8</div>
<div class="rh" style="top:358px;">9</div>
<div class="rh" style="top:379px;">10</div>
<div class="rh" style="top:400px;">11</div>
<div class="rh" style="top:421px;">12</div>
<div class="rh" style="top:442px;">13</div>
<div class="rh" style="top:463px;">14</div>
<div class="rh" style="top:484px;">15</div>
<div class="rh" style="top:505px;">16</div>
<div class="rh" style="top:526px;">17</div>
<div class="rh" style="top:547px;">18</div>
<div class="rh" style="top:568px;">19</div>
<div class="rh" style="top:589px;">20</div>
<div class="rh" style="top:610px;">21</div>
<div class="a" style="left:220px;top:190px;width:3px;height:21px;background:#3c8cc8"></div>
<div class="a" style="left:228px;top:193px;width:918px;height:433px;background:#666666"></div>
<div class="a" style="left:198px;top:631px;width:953px;height:12px;background:#fbfbfb;border-top:1px solid #d6d6d6"></div><div class="a" style="left:198px;top:631px;width:14px;height:12px;background:linear-gradient(#fefefe,#f3f3f3);border:1px solid #cdcdcd;border-bottom:none;border-left:none"></div><svg style="left:202px;top:633px" width="4" height="8" viewBox="0 0 4 8"><path d="M4 0L0 4L4 8z" fill="#585858"/></svg><div class="a" style="left:388px;top:631px;width:749px;height:12px;background:#e5e5e5;border:1px solid #cdcdcd;border-bottom:none"></div><div class="a" style="left:1137px;top:631px;width:14px;height:12px;background:linear-gradient(#fefefe,#f3f3f3);border-top:1px solid #cdcdcd"></div><svg style="left:1142px;top:633px" width="4" height="8" viewBox="0 0 4 8"><path d="M0 0L4 4L0 8z" fill="#585858"/></svg>
<div class="a" style="left:1151px;top:170px;width:14px;height:460px;background:#e5e5e5;border-left:1px solid #cfcfcf;border-right:1px solid #d0d0d0"></div><div class="a" style="left:1151px;top:170px;width:14px;height:14px;background:linear-gradient(#fefefe,#f3f3f3);border:1px solid #cdcdcd;border-top:none"></div><svg style="left:1154px;top:174px" width="8" height="4" viewBox="0 0 8 4"><path d="M0 4L4 0L8 4z" fill="#585858"/></svg><div class="a" style="left:1151px;top:184px;width:14px;height:92px;background:linear-gradient(90deg,#fefefe,#f4f4f4);border:1px solid #cdcdcd;border-top:none"></div><div class="a" style="left:1151px;top:616px;width:14px;height:14px;background:linear-gradient(#fefefe,#f3f3f3);border:1px solid #cdcdcd;border-bottom:none"></div><svg style="left:1154px;top:620px" width="8" height="4" viewBox="0 0 8 4"><path d="M0 0L4 4L8 0z" fill="#585858"/></svg>
<div class="a" style="left:1151px;top:631px;width:14px;height:12px;background:#f0f0f0"></div>
<div class="a" style="left:577px;top:645px;width:3px;height:2px;background:#6e6e6e;border-radius:1px"></div>
<div class="a" style="left:583px;top:645px;width:3px;height:2px;background:#6e6e6e;border-radius:1px"></div>
<div class="a" style="left:589px;top:645px;width:3px;height:2px;background:#6e6e6e;border-radius:1px"></div>
<div class="a" style="left:595px;top:645px;width:3px;height:2px;background:#6e6e6e;border-radius:1px"></div>
<svg style="left:2px;top:656px" width="173" height="232" viewBox="0 0 173 232"><defs><radialGradient id="cvg" cx="0.5" cy="0.5" r="0.78"><stop offset="0" stop-color="#ccd7f3"/><stop offset="0.4" stop-color="#adc0eb"/><stop offset="0.8" stop-color="#819fe1"/><stop offset="1" stop-color="#7998de"/></radialGradient></defs><rect x="0" y="0" width="173" height="232" fill="url(#cvg)"/><g><path d="M11.2 116C11.2 104 10.6 92 9.6 82C8.6 72 7.4 63 8.6 56" fill="none" stroke="#10305e" stroke-width="1.4" stroke-linecap="round"/><path d="M8.6 56C9.6 49.5 13.4 45 15.6 38.6C17.6 32.5 17.6 24.5 14.2 20.4C11.2 16.8 5.6 16.8 2.8 20.4C0.6 23.6 1.2 28 4.4 29.6" fill="none" stroke="#10305e" stroke-width="2.2" stroke-linecap="round"/><circle cx="5.2" cy="28" r="3.5" fill="#10305e"/><path d="M25.2 6.4C22.6 3.2 16.4 3.6 14.2 8.6C12 14 15 19.6 21 20.8C28 22.2 36.5 20.8 43 16.8C48.6 13.4 54.6 13 59.6 14.4C65.6 16.2 70.2 20 70.2 24C70.2 27.6 66.4 29.6 62.6 28.6" fill="none" stroke="#10305e" stroke-width="2.2" stroke-linecap="round"/><circle cx="22.5" cy="8.6" r="3.6" fill="#10305e"/><circle cx="61.2" cy="25.3" r="3" fill="#10305e"/><path d="M31 6.4C37 9.4 45 10.4 54 10.9C62 11.4 66 13.8 72 14.8C77 15.6 82 15.9 86.5 15.9" fill="none" stroke="#10305e" stroke-width="1.8" stroke-linecap="round"/><path d="M29.4 4.6C33 4 37.4 6 39.8 9.8C35 11 31 8.8 29.4 4.6z" fill="#10305e"/><path d="M40.4 5.2C43.8 5.2 46.6 7.6 47.6 10.6C44.2 11 41.4 8.8 40.4 5.2z" fill="#10305e"/><path d="M86.5 18.5C82 18.5 78 19.2 75.6 21.6C73 24.4 73.4 28 76.4 28.8C78.4 29.2 79.6 27.8 78.6 26.4" fill="none" stroke="#10305e" stroke-width="1.4" stroke-linecap="round"/><circle cx="78.3" cy="26.2" r="1.7" fill="#10305e"/><circle cx="72.7" cy="19" r="1" fill="#10305e"/><path d="M48.2 15C49 20 45.6 25 39.8 27C38.4 21.6 42 16.4 48.2 15z" fill="#10305e"/><path d="M51.6 16.8C52.6 14.8 55 13.8 57.4 14.2C56.4 16 54 17 51.6 16.8z" fill="#10305e"/><path d="M28 49.8C23.4 46.4 20.6 40.4 21.6 34.6C22.4 30.6 26 29 32.6 28.9C37.6 28.9 41.4 31.2 40.8 35C40.2 38.4 36.6 39.6 34.8 38" fill="none" stroke="#10305e" stroke-width="2" stroke-linecap="round"/><path d="M28 49.8C29.6 47.4 30.6 45 30.4 42.4" fill="none" stroke="#10305e" stroke-width="1.7" stroke-linecap="round"/><circle cx="34.7" cy="37.6" r="2.3" fill="#10305e"/><circle cx="30.4" cy="42.2" r="2.6" fill="#10305e"/><path d="M2 37.6C6 41 8 47 6.6 52.8C2.6 49.4 1 43.4 2 37.6z" fill="#10305e"/><path d="M4.2 51.4C6.4 53 7.6 55.6 7.6 58.4C5.4 56.8 4.2 54.2 4.2 51.4z" fill="#10305e"/><path d="M21.6 49.2C21 54.6 16.2 58.6 10.2 58.8C10.8 53.4 15.6 49.4 21.6 49.2z" fill="#10305e"/><path d="M12.4 61C11 68 11.6 77 14 81C16.4 84.6 21 83 22.4 78C23.4 73.6 21.2 70.4 19 70.6" fill="none" stroke="#10305e" stroke-width="2" stroke-linecap="round"/><path d="M12.6 59.6C13.6 62.6 13.2 66.6 11.6 69.6C10.4 66 10.8 62.4 12.6 59.6z" fill="#10305e"/><circle cx="19.3" cy="73.6" r="3.1" fill="#10305e"/><path d="M12.3 113C12.4 105 12.8 98.6 14 94.4C15.4 89.8 19 87.6 21.4 89C23 90.4 22.2 93 20.8 93.4" fill="none" stroke="#10305e" stroke-width="1.3" stroke-linecap="round"/><circle cx="20.6" cy="93.3" r="1.8" fill="#10305e"/><circle cx="14" cy="86.8" r="1" fill="#10305e"/></g><g transform="translate(173,0) scale(-1,1)"><path d="M11.2 116C11.2 104 10.6 92 9.6 82C8.6 72 7.4 63 8.6 56" fill="none" stroke="#10305e" stroke-width="1.4" stroke-linecap="round"/><path d="M8.6 56C9.6 49.5 13.4 45 15.6 38.6C17.6 32.5 17.6 24.5 14.2 20.4C11.2 16.8 5.6 16.8 2.8 20.4C0.6 23.6 1.2 28 4.4 29.6" fill="none" stroke="#10305e" stroke-width="2.2" stroke-linecap="round"/><circle cx="5.2" cy="28" r="3.5" fill="#10305e"/><path d="M25.2 6.4C22.6 3.2 16.4 3.6 14.2 8.6C12 14 15 19.6 21 20.8C28 22.2 36.5 20.8 43 16.8C48.6 13.4 54.6 13 59.6 14.4C65.6 16.2 70.2 20 70.2 24C70.2 27.6 66.4 29.6 62.6 28.6" fill="none" stroke="#10305e" stroke-width="2.2" stroke-linecap="round"/><circle cx="22.5" cy="8.6" r="3.6" fill="#10305e"/><circle cx="61.2" cy="25.3" r="3" fill="#10305e"/><path d="M31 6.4C37 9.4 45 10.4 54 10.9C62 11.4 66 13.8 72 14.8C77 15.6 82 15.9 86.5 15.9" fill="none" stroke="#10305e" stroke-width="1.8" stroke-linecap="round"/><path d="M29.4 4.6C33 4 37.4 6 39.8 9.8C35 11 31 8.8 29.4 4.6z" fill="#10305e"/><path d="M40.4 5.2C43.8 5.2 46.6 7.6 47.6 10.6C44.2 11 41.4 8.8 40.4 5.2z" fill="#10305e"/><path d="M86.5 18.5C82 18.5 78 19.2 75.6 21.6C73 24.4 73.4 28 76.4 28.8C78.4 29.2 79.6 27.8 78.6 26.4" fill="none" stroke="#10305e" stroke-width="1.4" stroke-linecap="round"/><circle cx="78.3" cy="26.2" r="1.7" fill="#10305e"/><circle cx="72.7" cy="19" r="1" fill="#10305e"/><path d="M48.2 15C49 20 45.6 25 39.8 27C38.4 21.6 42 16.4 48.2 15z" fill="#10305e"/><path d="M51.6 16.8C52.6 14.8 55 13.8 57.4 14.2C56.4 16 54 17 51.6 16.8z" fill="#10305e"/><path d="M28 49.8C23.4 46.4 20.6 40.4 21.6 34.6C22.4 30.6 26 29 32.6 28.9C37.6 28.9 41.4 31.2 40.8 35C40.2 38.4 36.6 39.6 34.8 38" fill="none" stroke="#10305e" stroke-width="2" stroke-linecap="round"/><path d="M28 49.8C29.6 47.4 30.6 45 30.4 42.4" fill="none" stroke="#10305e" stroke-width="1.7" stroke-linecap="round"/><circle cx="34.7" cy="37.6" r="2.3" fill="#10305e"/><circle cx="30.4" cy="42.2" r="2.6" fill="#10305e"/><path d="M2 37.6C6 41 8 47 6.6 52.8C2.6 49.4 1 43.4 2 37.6z" fill="#10305e"/><path d="M4.2 51.4C6.4 53 7.6 55.6 7.6 58.4C5.4 56.8 4.2 54.2 4.2 51.4z" fill="#10305e"/><path d="M21.6 49.2C21 54.6 16.2 58.6 10.2 58.8C10.8 53.4 15.6 49.4 21.6 49.2z" fill="#10305e"/><path d="M12.4 61C11 68 11.6 77 14 81C16.4 84.6 21 83 22.4 78C23.4 73.6 21.2 70.4 19 70.6" fill="none" stroke="#10305e" stroke-width="2" stroke-linecap="round"/><path d="M12.6 59.6C13.6 62.6 13.2 66.6 11.6 69.6C10.4 66 10.8 62.4 12.6 59.6z" fill="#10305e"/><circle cx="19.3" cy="73.6" r="3.1" fill="#10305e"/><path d="M12.3 113C12.4 105 12.8 98.6 14 94.4C15.4 89.8 19 87.6 21.4 89C23 90.4 22.2 93 20.8 93.4" fill="none" stroke="#10305e" stroke-width="1.3" stroke-linecap="round"/><circle cx="20.6" cy="93.3" r="1.8" fill="#10305e"/><circle cx="14" cy="86.8" r="1" fill="#10305e"/></g><g transform="translate(0,232) scale(1,-1)"><path d="M11.2 116C11.2 104 10.6 92 9.6 82C8.6 72 7.4 63 8.6 56" fill="none" stroke="#10305e" stroke-width="1.4" stroke-linecap="round"/><path d="M8.6 56C9.6 49.5 13.4 45 15.6 38.6C17.6 32.5 17.6 24.5 14.2 20.4C11.2 16.8 5.6 16.8 2.8 20.4C0.6 23.6 1.2 28 4.4 29.6" fill="none" stroke="#10305e" stroke-width="2.2" stroke-linecap="round"/><circle cx="5.2" cy="28" r="3.5" fill="#10305e"/><path d="M25.2 6.4C22.6 3.2 16.4 3.6 14.2 8.6C12 14 15 19.6 21 20.8C28 22.2 36.5 20.8 43 16.8C48.6 13.4 54.6 13 59.6 14.4C65.6 16.2 70.2 20 70.2 24C70.2 27.6 66.4 29.6 62.6 28.6" fill="none" stroke="#10305e" stroke-width="2.2" stroke-linecap="round"/><circle cx="22.5" cy="8.6" r="3.6" fill="#10305e"/><circle cx="61.2" cy="25.3" r="3" fill="#10305e"/><path d="M31 6.4C37 9.4 45 10.4 54 10.9C62 11.4 66 13.8 72 14.8C77 15.6 82 15.9 86.5 15.9" fill="none" stroke="#10305e" stroke-width="1.8" stroke-linecap="round"/><path d="M29.4 4.6C33 4 37.4 6 39.8 9.8C35 11 31 8.8 29.4 4.6z" fill="#10305e"/><path d="M40.4 5.2C43.8 5.2 46.6 7.6 47.6 10.6C44.2 11 41.4 8.8 40.4 5.2z" fill="#10305e"/><path d="M86.5 18.5C82 18.5 78 19.2 75.6 21.6C73 24.4 73.4 28 76.4 28.8C78.4 29.2 79.6 27.8 78.6 26.4" fill="none" stroke="#10305e" stroke-width="1.4" stroke-linecap="round"/><circle cx="78.3" cy="26.2" r="1.7" fill="#10305e"/><circle cx="72.7" cy="19" r="1" fill="#10305e"/><path d="M48.2 15C49 20 45.6 25 39.8 27C38.4 21.6 42 16.4 48.2 15z" fill="#10305e"/><path d="M51.6 16.8C52.6 14.8 55 13.8 57.4 14.2C56.4 16 54 17 51.6 16.8z" fill="#10305e"/><path d="M28 49.8C23.4 46.4 20.6 40.4 21.6 34.6C22.4 30.6 26 29 32.6 28.9C37.6 28.9 41.4 31.2 40.8 35C40.2 38.4 36.6 39.6 34.8 38" fill="none" stroke="#10305e" stroke-width="2" stroke-linecap="round"/><path d="M28 49.8C29.6 47.4 30.6 45 30.4 42.4" fill="none" stroke="#10305e" stroke-width="1.7" stroke-linecap="round"/><circle cx="34.7" cy="37.6" r="2.3" fill="#10305e"/><circle cx="30.4" cy="42.2" r="2.6" fill="#10305e"/><path d="M2 37.6C6 41 8 47 6.6 52.8C2.6 49.4 1 43.4 2 37.6z" fill="#10305e"/><path d="M4.2 51.4C6.4 53 7.6 55.6 7.6 58.4C5.4 56.8 4.2 54.2 4.2 51.4z" fill="#10305e"/><path d="M21.6 49.2C21 54.6 16.2 58.6 10.2 58.8C10.8 53.4 15.6 49.4 21.6 49.2z" fill="#10305e"/><path d="M12.4 61C11 68 11.6 77 14 81C16.4 84.6 21 83 22.4 78C23.4 73.6 21.2 70.4 19 70.6" fill="none" stroke="#10305e" stroke-width="2" stroke-linecap="round"/><path d="M12.6 59.6C13.6 62.6 13.2 66.6 11.6 69.6C10.4 66 10.8 62.4 12.6 59.6z" fill="#10305e"/><circle cx="19.3" cy="73.6" r="3.1" fill="#10305e"/><path d="M12.3 113C12.4 105 12.8 98.6 14 94.4C15.4 89.8 19 87.6 21.4 89C23 90.4 22.2 93 20.8 93.4" fill="none" stroke="#10305e" stroke-width="1.3" stroke-linecap="round"/><circle cx="20.6" cy="93.3" r="1.8" fill="#10305e"/><circle cx="14" cy="86.8" r="1" fill="#10305e"/></g><g transform="translate(173,232) scale(-1,-1)"><path d="M11.2 116C11.2 104 10.6 92 9.6 82C8.6 72 7.4 63 8.6 56" fill="none" stroke="#10305e" stroke-width="1.4" stroke-linecap="round"/><path d="M8.6 56C9.6 49.5 13.4 45 15.6 38.6C17.6 32.5 17.6 24.5 14.2 20.4C11.2 16.8 5.6 16.8 2.8 20.4C0.6 23.6 1.2 28 4.4 29.6" fill="none" stroke="#10305e" stroke-width="2.2" stroke-linecap="round"/><circle cx="5.2" cy="28" r="3.5" fill="#10305e"/><path d="M25.2 6.4C22.6 3.2 16.4 3.6 14.2 8.6C12 14 15 19.6 21 20.8C28 22.2 36.5 20.8 43 16.8C48.6 13.4 54.6 13 59.6 14.4C65.6 16.2 70.2 20 70.2 24C70.2 27.6 66.4 29.6 62.6 28.6" fill="none" stroke="#10305e" stroke-width="2.2" stroke-linecap="round"/><circle cx="22.5" cy="8.6" r="3.6" fill="#10305e"/><circle cx="61.2" cy="25.3" r="3" fill="#10305e"/><path d="M31 6.4C37 9.4 45 10.4 54 10.9C62 11.4 66 13.8 72 14.8C77 15.6 82 15.9 86.5 15.9" fill="none" stroke="#10305e" stroke-width="1.8" stroke-linecap="round"/><path d="M29.4 4.6C33 4 37.4 6 39.8 9.8C35 11 31 8.8 29.4 4.6z" fill="#10305e"/><path d="M40.4 5.2C43.8 5.2 46.6 7.6 47.6 10.6C44.2 11 41.4 8.8 40.4 5.2z" fill="#10305e"/><path d="M86.5 18.5C82 18.5 78 19.2 75.6 21.6C73 24.4 73.4 28 76.4 28.8C78.4 29.2 79.6 27.8 78.6 26.4" fill="none" stroke="#10305e" stroke-width="1.4" stroke-linecap="round"/><circle cx="78.3" cy="26.2" r="1.7" fill="#10305e"/><circle cx="72.7" cy="19" r="1" fill="#10305e"/><path d="M48.2 15C49 20 45.6 25 39.8 27C38.4 21.6 42 16.4 48.2 15z" fill="#10305e"/><path d="M51.6 16.8C52.6 14.8 55 13.8 57.4 14.2C56.4 16 54 17 51.6 16.8z" fill="#10305e"/><path d="M28 49.8C23.4 46.4 20.6 40.4 21.6 34.6C22.4 30.6 26 29 32.6 28.9C37.6 28.9 41.4 31.2 40.8 35C40.2 38.4 36.6 39.6 34.8 38" fill="none" stroke="#10305e" stroke-width="2" stroke-linecap="round"/><path d="M28 49.8C29.6 47.4 30.6 45 30.4 42.4" fill="none" stroke="#10305e" stroke-width="1.7" stroke-linecap="round"/><circle cx="34.7" cy="37.6" r="2.3" fill="#10305e"/><circle cx="30.4" cy="42.2" r="2.6" fill="#10305e"/><path d="M2 37.6C6 41 8 47 6.6 52.8C2.6 49.4 1 43.4 2 37.6z" fill="#10305e"/><path d="M4.2 51.4C6.4 53 7.6 55.6 7.6 58.4C5.4 56.8 4.2 54.2 4.2 51.4z" fill="#10305e"/><path d="M21.6 49.2C21 54.6 16.2 58.6 10.2 58.8C10.8 53.4 15.6 49.4 21.6 49.2z" fill="#10305e"/><path d="M12.4 61C11 68 11.6 77 14 81C16.4 84.6 21 83 22.4 78C23.4 73.6 21.2 70.4 19 70.6" fill="none" stroke="#10305e" stroke-width="2" stroke-linecap="round"/><path d="M12.6 59.6C13.6 62.6 13.2 66.6 11.6 69.6C10.4 66 10.8 62.4 12.6 59.6z" fill="#10305e"/><circle cx="19.3" cy="73.6" r="3.1" fill="#10305e"/><path d="M12.3 113C12.4 105 12.8 98.6 14 94.4C15.4 89.8 19 87.6 21.4 89C23 90.4 22.2 93 20.8 93.4" fill="none" stroke="#10305e" stroke-width="1.3" stroke-linecap="round"/><circle cx="20.6" cy="93.3" r="1.8" fill="#10305e"/><circle cx="14" cy="86.8" r="1" fill="#10305e"/></g></svg>
<div class="a" style="left:176px;top:766.3px;width:2.4px;height:2.4px;background:#6e6e6e;border-radius:1.2px"></div>
<div class="a" style="left:176px;top:772.3px;width:2.4px;height:2.4px;background:#6e6e6e;border-radius:1.2px"></div>
<div class="a" style="left:176px;top:778.3px;width:2.4px;height:2.4px;background:#6e6e6e;border-radius:1.2px"></div>
<div class="a" style="left:176px;top:784.3px;width:2.4px;height:2.4px;background:#6e6e6e;border-radius:1.2px"></div>
<div class="a" style="left:180px;top:650px;width:385px;height:246px;overflow:hidden">
<div class="lbl" style="left:79.9px;top:6px"><span id="f14" style="letter-spacing:-0.858px;">Title</span></div>
<div class="val" style="left:108px;top:6px;color:#000;"><span id="f15" style="letter-spacing:-0.040px;">&quot;Unknown&quot;</span></div>
<div class="lbl" style="left:54.9px;top:25px"><span id="f16" style="letter-spacing:-0.124px;">Authors</span></div>
<div class="val" style="left:108px;top:25px;"><span id="f17" style="letter-spacing:-0.180px;">The 10 Angry Men</span></div>
<div class="lbl" style="left:76.8px;top:44px"><span id="f18" style="letter-spacing:-0.575px;">Tags</span></div>
<div class="val" style="left:108px;top:44px;"><span style="">a</span></div>
<div class="lbl" style="left:60.1px;top:63px"><span id="f19" style="letter-spacing:-0.434px;">Folders</span></div>
<div class="val" style="left:108px;top:63px;"><span id="f20" style="letter-spacing:-0.506px;">Book files<span style="color:#000">,</span> Data files</span></div>
<div class="lbl" style="left:74.2px;top:82px"><span id="f21" style="letter-spacing:-0.327px;">Date</span></div>
<div class="val" style="left:108px;top:82px;"><span id="f22" style="letter-spacing:0.101px;">01 Jan 2023</span></div>
<div class="lbl" style="left:54.4px;top:101px"><span id="f23" style="letter-spacing:-0.671px;">Modified</span></div>
<div class="val" style="left:108px;top:101px;"><span id="f24" style="letter-spacing:0.100px;">2024-06-05T11:58:43+01:00</span></div>
<div class="lbl" style="left:60.1px;top:120px"><span id="f25" style="letter-spacing:-0.004px;">comp4</span></div>
<div class="val" style="left:108px;top:120px;"><span id="f26" style="letter-spacing:-0.619px;">aaa</span></div>
<div class="lbl" style="left:60.1px;top:139px"><span id="f27" style="letter-spacing:-0.004px;">comp5</span></div>
<div class="val" style="left:108px;top:139px;"><span id="f28" style="letter-spacing:-0.112px;">1444</span></div>
<div class="lbl" style="left:52.4px;top:158px"><span id="f29" style="letter-spacing:0.230px;">comp_2</span></div>
<div class="val" style="left:108px;top:158px;"><span id="f30" style="letter-spacing:0.055px;">05/06/24 11:58:43 AM</span></div>
<div class="lbl" style="left:40.8px;top:177px"><span id="f31" style="letter-spacing:-0.351px;">composite</span></div>
<div class="val" style="left:108px;top:177px;color:#000;"><span id="f32" style="letter-spacing:-0.719px;">aaaaa</span></div>
<div class="lbl" style="left:56.2px;top:196px"><span id="f33" style="letter-spacing:-0.221px;">mydate</span></div>
<div class="val" style="left:108px;top:196px;"><span id="f34" style="letter-spacing:-0.009px;">2023.09.06</span></div>
<div class="lbl" style="left:57.5px;top:215px"><span id="f35" style="letter-spacing:-0.388px;">myfloat</span></div>
<div class="val" style="left:108px;top:215px;"><span id="f36" style="letter-spacing:-0.144px;">1.1251</span></div>
<div class="lbl" style="left:68.6px;top:234px"><span id="f37" style="letter-spacing:-0.351px;">myint</span></div>
<div class="val" style="left:108px;top:234px;"><span id="f38" style="letter-spacing:-0.010px;">$ 0009</span></div>
</div>
<svg style="left:406px;top:677px" width="15" height="14" viewBox="0 0 15 14"><rect x="0" y="0" width="15" height="14" rx="2.4" fill="#1a22c8"/><path d="M4 10.4L10.6 3.8" stroke="#fff" stroke-width="1.8"/><path d="M5.8 3.2h5.6v5.6" fill="none" stroke="#fff" stroke-width="1.8"/></svg>
<svg style="left:426px;top:677px" width="14" height="14" viewBox="0 0 14 14"><path d="M3.2 8.4L9.8 1.8l2.6 2.6L5.8 11z" fill="#1a22c8"/><path d="M10.6 1l0.8-0.8a0.8 0.8 0 0 1 1.1 0l1.5 1.5a0.8 0.8 0 0 1 0 1.1l-0.8 0.8z" fill="#1a22c8"/><path d="M2.6 9.2l2.4 2.4-3.6 1.2z" fill="#1a22c8"/></svg>
<div class="val" style="left:570px;top:654px;color:#000">2</div>
<div class="val" style="left:570px;top:683px"><span id="f39" style="letter-spacing:-0.393px;">Data files comment</span></div>
<div class="val" style="left:570px;top:714px;color:#000;font-weight:bold;font-size:17px;line-height:22px;height:22px;font-family:'DejaVu Sans',sans-serif;font-stretch:normal;"><span id="f40" style="letter-spacing:-1.323px;">comment2</span></div>
<div class="val" style="left:570px;top:747px;color:#000"><span id="f41" style="letter-spacing:-0.365px;">this is a comment</span></div>
<div class="a" style="left:1151px;top:648px;width:14px;height:249px;background:#e5e5e5;border-left:1px solid #cfcfcf;border-right:1px solid #d0d0d0"></div><div class="a" style="left:1151px;top:648px;width:14px;height:14px;background:linear-gradient(#fefefe,#f3f3f3);border:1px solid #cdcdcd;border-top:none"></div><svg style="left:1154px;top:652px" width="8" height="4" viewBox="0 0 8 4"><path d="M0 4L4 0L8 4z" fill="#585858"/></svg><div class="a" style="left:1151px;top:662px;width:14px;height:174px;background:linear-gradient(90deg,#fefefe,#f4f4f4);border:1px solid #cdcdcd;border-top:none"></div><div class="a" style="left:1151px;top:883px;width:14px;height:14px;background:linear-gradient(#fefefe,#f3f3f3);border:1px solid #cdcdcd;border-bottom:none"></div><svg style="left:1154px;top:887px" width="8" height="4" viewBox="0 0 8 4"><path d="M0 0L4 4L8 0z" fill="#585858"/></svg>
<div class="t " style="left:7px;top:908.5px;">calibre 7.12* created by Kovid Goyal</div>
<div class="t " style="left:231px;top:908.5px;">[98 books, 1 selected]</div>
<div class="t " style="left:756.5px;top:908.5px;color:#0e0eb2;text-decoration:underline"><span id="f42" style="letter-spacing:-0.109px;">2 plugin updates available</span></div>
<div class="sbtn" style="left:910.5px;background:#dcdcdc"></div>
<svg style="left:913.5px;top:907px" width="16" height="16" viewBox="0 0 16 16"><defs><linearGradient id="mg3" x1="0" y1="0" x2="1" y2="1"><stop offset="0" stop-color="#ffffff"/><stop offset="1" stop-color="#b9d3f3"/></linearGradient></defs><path d="M10 10L14.2 14.2" stroke="#3a74cc" stroke-width="3.3" stroke-linecap="round"/><circle cx="6" cy="6" r="4.8" fill="url(#mg3)" stroke="#86abe6" stroke-width="1.5"/></svg>
<div class="sbtn" style="left:940.5px;background:#dcdcdc"></div>
<svg style="left:943.5px;top:907px" width="17" height="16" viewBox="0 0 17 16"><g transform="translate(0.5,0.5)"><path d="M2 10.4L8.4 4h4.4v4.4L6.4 14.8z" fill="#f6f6f6" stroke="#161616" stroke-width="1.9" stroke-linejoin="round"/><path d="M5 10.8L10.2 5.6" stroke="#e08a30" stroke-width="1.7"/><path d="M12.6 4.2L15.6 1.4" stroke="#3a3a3a" stroke-width="1"/></g></svg>
<div class="sbtn" style="left:970.5px;background:#dcdcdc"></div>
<svg style="left:973.5px;top:907px" width="17" height="16" viewBox="0 0 20 20"><path d="M5 1.2h12.6a1 1 0 0 1 1 1.2L15.6 16.4H1.6L4 2a1 1 0 0 1 1-0.8z" fill="#b8975a"/><path d="M1.6 16.4h14l-0.5 2.4H2.2a1.2 1.2 0 0 1-0.6-2.4z" fill="#f2ead6" stroke="#9c7c42" stroke-width="0.7"/><path d="M7 4.2h8M6.6 6.6h8" stroke="#6e5426" stroke-width="1.3"/></svg>
<div class="sbtn" style="left:1000.5px;background:#fcfcfc"></div>
<svg style="left:1003.5px;top:907px" width="17" height="16" viewBox="0 0 17 16"><rect x="0.4" y="-0.2" width="4.5" height="4.5" rx="0.6" fill="#2f6cc8"/><rect x="0.4" y="5.5" width="4.5" height="4.5" rx="0.6" fill="#4a88e0"/><rect x="0.4" y="11.2" width="4.5" height="4.5" rx="0.6" fill="#2a62b8"/><rect x="6.2" y="-0.2" width="4.5" height="4.5" rx="0.6" fill="#2f6cc8"/><rect x="6.2" y="5.5" width="4.5" height="4.5" rx="0.6" fill="#7aa8ec"/><rect x="6.2" y="11.2" width="4.5" height="4.5" rx="0.6" fill="#2a62b8"/><rect x="12" y="-0.2" width="4.5" height="4.5" rx="0.6" fill="#2f6cc8"/><rect x="12" y="5.5" width="4.5" height="4.5" rx="0.6" fill="#4a88e0"/><rect x="12" y="11.2" width="4.5" height="4.5" rx="0.6" fill="#2a62b8"/></svg>
<div class="sbtn" style="left:1030.5px;background:#fcfcfc"></div>
<svg style="left:1033.5px;top:907px" width="17" height="16" viewBox="0 0 17 16"><defs><linearGradient id="cfg" x1="0" y1="0" x2="0" y2="1"><stop offset="0" stop-color="#2458b0"/><stop offset="1" stop-color="#4a86e0"/></linearGradient></defs><path d="M0.4 2L4.8 3.4V12.6L0.4 14z" fill="url(#cfg)"/><rect x="5.7" y="2.4" width="5.6" height="11.2" fill="url(#cfg)"/><path d="M16.6 2L12.2 3.4V12.6L16.6 14z" fill="url(#cfg)"/></svg>
<div class="sbtn" style="left:1060.5px;background:#fcfcfc"></div>
<svg style="left:1063.5px;top:907px" width="17" height="16" viewBox="0 0 17 16"><path d="M0.2 8C3.2 3.2 13.8 3.2 16.8 8 13.8 12.8 3.2 12.8 0.2 8z" fill="#fdfdfd" stroke="#2a2a2a" stroke-width="1"/><circle cx="8.5" cy="8" r="4.3" fill="#2a48c4"/><circle cx="8.5" cy="8" r="2.2" fill="#0a1258"/></svg>
<div class="t " style="left:1095px;top:908.5px;"><span id="f43" style="letter-spacing:0.343px;">Jobs: 0</span></div>
<div class="a" style="left:1161px;top:925px;width:2px;height:2px;background:#bcbcbc"></div>
<div class="a" style="left:1158px;top:925px;width:2px;height:2px;background:#bcbcbc"></div>
<div class="a" style="left:1161px;top:922px;width:2px;height:2px;background:#bcbcbc"></div>
<div class="a" style="left:1155px;top:925px;width:2px;height:2px;background:#bcbcbc"></div>
<div class="a" style="left:1161px;top:919px;width:2px;height:2px;background:#bcbcbc"></div>
<div class="a" style="left:1158px;top:922px;width:2px;height:2px;background:#bcbcbc"></div>
<div class="a" style="left:0;top:31px;width:1px;height:899px;background:#1a6cbc"></div>
<div class="a" style="left:1165px;top:31px;width:1px;height:899px;background:#1a6cbc"></div>
<div class="a" style="left:0;top:929px;width:1166px;height:1px;background:#1a6cbc"></div>
</body></html>
